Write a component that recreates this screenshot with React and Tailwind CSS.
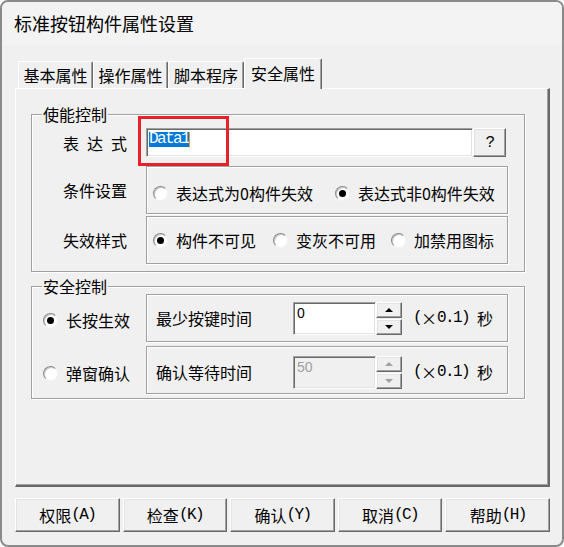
const cjk = "font-['Noto_Sans_CJK_SC',sans-serif]";
const mono = "font-['Liberation_Mono','Noto_Sans_CJK_SC',monospace] tracking-[-1.6px]";
const raised =
  'border border-t-white border-l-white border-b-[#696969] border-r-[#696969] shadow-[inset_-1px_-1px_0_#a0a0a0,inset_1px_1px_0_#e3e3e3]';
const sunken =
  'border border-t-[#a0a0a0] border-l-[#a0a0a0] border-b-white border-r-white shadow-[inset_1px_1px_0_#696969,inset_-1px_-1px_0_#e3e3e3]';
const etched = 'border border-[#a0a0a0] shadow-[inset_1px_1px_0_#fff,1px_1px_0_#fff]';

function Radio({ checked }) {
  return (
    <span className="flex h-[15px] w-[15px] shrink-0 items-center justify-center rounded-full border border-t-[#8a8a8a] border-l-[#8a8a8a] border-b-[#f4f4f4] border-r-[#f4f4f4] bg-white shadow-[inset_1px_1px_0_#c8c8c8]">
      {checked && <span className="h-[7px] w-[7px] rounded-full bg-black" />}
    </span>
  );
}

function Option({ checked, label, className = '' }) {
  return (
    <span className={`flex items-center gap-[8px] ${className}`}>
      <Radio checked={checked} />
      <span className="leading-[20px]">{label}</span>
    </span>
  );
}

function Tab({ label, active, className }) {
  if (active) {
    return (
      <div
        className={`relative z-10 -mb-[1px] flex h-[31px] items-center justify-center rounded-t-[2px] border-l border-t border-r border-l-white border-t-white border-r-[#696969] bg-[#f0f0f0] pb-[2px] shadow-[inset_-1px_0_0_#a0a0a0] ${className}`}
      >
        {label}
      </div>
    );
  }
  return (
    <div
      className={`flex h-[27px] items-center justify-center rounded-t-[2px] border-l border-t border-r border-l-white border-t-white border-r-[#696969] shadow-[inset_-1px_0_0_#a0a0a0] ${className}`}
    >
      {label}
    </div>
  );
}

function Group({ label, className, children }) {
  return (
    <div className={`relative w-[494px] ${etched} ${className}`}>
      <span className="absolute -top-[10px] left-[10px] bg-[#f0f0f0] px-[1px] leading-[18px]">{label}</span>
      {children}
    </div>
  );
}

function Spin({ disabled }) {
  const up = disabled ? 'border-b-[#a0a0a0]' : 'border-b-black';
  const down = disabled ? 'border-t-[#a0a0a0]' : 'border-t-black';
  return (
    <div className="flex h-[33px] w-[26px] flex-col">
      <div className={`flex h-[16px] items-center justify-center ${raised}`}>
        <span className={`h-0 w-0 border-x-[4px] border-b-[4px] border-x-transparent ${up}`} />
      </div>
      <div className={`mt-[1px] flex h-[16px] items-center justify-center ${raised}`}>
        <span className={`h-0 w-0 border-x-[4px] border-t-[4px] border-x-transparent ${down}`} />
      </div>
    </div>
  );
}

function Unit() {
  return (
    <span className="ml-[11px] flex items-center leading-[20px]">
      <span className={mono}>(</span>
      <span className="w-[16px] text-center">×</span>
      <span className={mono}>0.1)</span>
      <span className="ml-[8px]">秒</span>
    </span>
  );
}

function Btn({ label, k }) {
  return (
    <button className={`flex h-[34px] items-center justify-center bg-[#f0f0f0] ${raised}`}>
      <span>{label}</span>
      <span className={mono}>({k})</span>
    </button>
  );
}

export default function App() {
  return (
    <div
      className={`box-border flex h-[547px] w-[564px] flex-col overflow-hidden rounded-[8px] border-2 border-[#8a8a8a] bg-[#f0f0f0] text-[16px] text-black ${cjk}`}
    >
      <div className="flex h-[43px] shrink-0 items-center bg-[#f3f3f3] pl-[12px] text-[18px]">标准按钮构件属性设置</div>

      <div className="flex flex-col pl-[13px] pr-[12px] pt-[13px]">
        <div className="flex h-[30px] items-end pl-[3px]">
          <Tab label="基本属性" className="w-[75px]" />
          <Tab label="操作属性" className="w-[75px]" />
          <Tab label="脚本程序" className="w-[76px]" />
          <Tab label="安全属性" active className="w-[78px]" />
        </div>

        <div className="h-[399px] border-l border-t border-r-2 border-b-2 border-l-white border-t-white border-r-[#696969] border-b-[#696969] pl-[15px] pt-[25px] shadow-[inset_-1px_-1px_0_#a0a0a0]">
          <Group label="使能控制" className="h-[158px] pt-[13px]">
            <div className="relative flex h-[29px]">
              <div className="flex w-[114px] items-center gap-[8px] pl-[31px]">
                <span>表</span>
                <span>达</span>
                <span>式</span>
              </div>
              <div className={`flex w-[327px] items-start bg-white pl-[2px] pt-[3px] ${sunken}`}>
                <span className={`bg-[#0078d7] leading-[15px] text-white ${mono}`}>Data1</span>
                <span className="h-[15px] w-[1px] bg-[#f7941d]" />
              </div>
              <button className={`flex h-[29px] w-[33px] items-center justify-center bg-[#f0f0f0] ${raised} ${mono}`}>?</button>
              <div className="pointer-events-none absolute -top-[12px] left-[106px] z-20 h-[50px] w-[91px] border-[3px] border-[#e8202a]" />
            </div>

            <div className="mt-[9px] flex h-[48px]">
              <div className="flex w-[114px] items-center pl-[31px]">条件设置</div>
              <div className={`flex w-[362px] items-center pl-[6px] pt-[6px] ${etched}`}>
                <Option label="表达式为0构件失效" />
                <Option checked label="表达式非0构件失效" className="ml-[22px]" />
              </div>
            </div>

            <div className="mt-[2px] flex h-[48px]">
              <div className="flex w-[114px] items-center pl-[31px]">失效样式</div>
              <div className={`flex w-[362px] items-center pl-[6px] ${etched}`}>
                <Option checked label="构件不可见" />
                <Option label="变灰不可用" className="ml-[17px]" />
                <Option label="加禁用图标" className="ml-[15px]" />
              </div>
            </div>
          </Group>

          <Group label="安全控制" className="mt-[14px] h-[113px] pt-[7px]">
            <div className="flex h-[48px]">
              <div className="flex w-[114px] items-center pl-[11px] pt-[4px]">
                <Option checked label="长按生效" />
              </div>
              <div className={`flex w-[362px] items-center pl-[9px] ${etched}`}>
                <span className="w-[137px]">最少按键时间</span>
                <div className={`h-[33px] w-[83px] bg-white pl-[3px] pt-[2px] font-['Liberation_Sans',sans-serif] text-[14px] leading-[16px] ${sunken}`}>
                  0
                </div>
                <Spin />
                <Unit />
              </div>
            </div>

            <div className="mt-[4px] flex h-[48px]">
              <div className="flex w-[114px] items-center pl-[11px] pt-[6px]">
                <Option label="弹窗确认" />
              </div>
              <div className={`flex w-[362px] items-center pl-[9px] pt-[4px] ${etched}`}>
                <span className="w-[137px]">确认等待时间</span>
                <div className={`h-[33px] w-[83px] bg-[#f0f0f0] pl-[3px] pt-[2px] font-['Liberation_Sans',sans-serif] text-[14px] leading-[16px] text-[#a0a0a0] ${sunken}`}>
                  50
                </div>
                <Spin disabled />
                <Unit />
              </div>
            </div>
          </Group>
        </div>

        <div className="mt-[11px] grid grid-cols-5 gap-[3px]">
          <Btn label="权限" k="A" />
          <Btn label="检查" k="K" />
          <Btn label="确认" k="Y" />
          <Btn label="取消" k="C" />
          <Btn label="帮助" k="H" />
        </div>
      </div>
    </div>
  );
}
